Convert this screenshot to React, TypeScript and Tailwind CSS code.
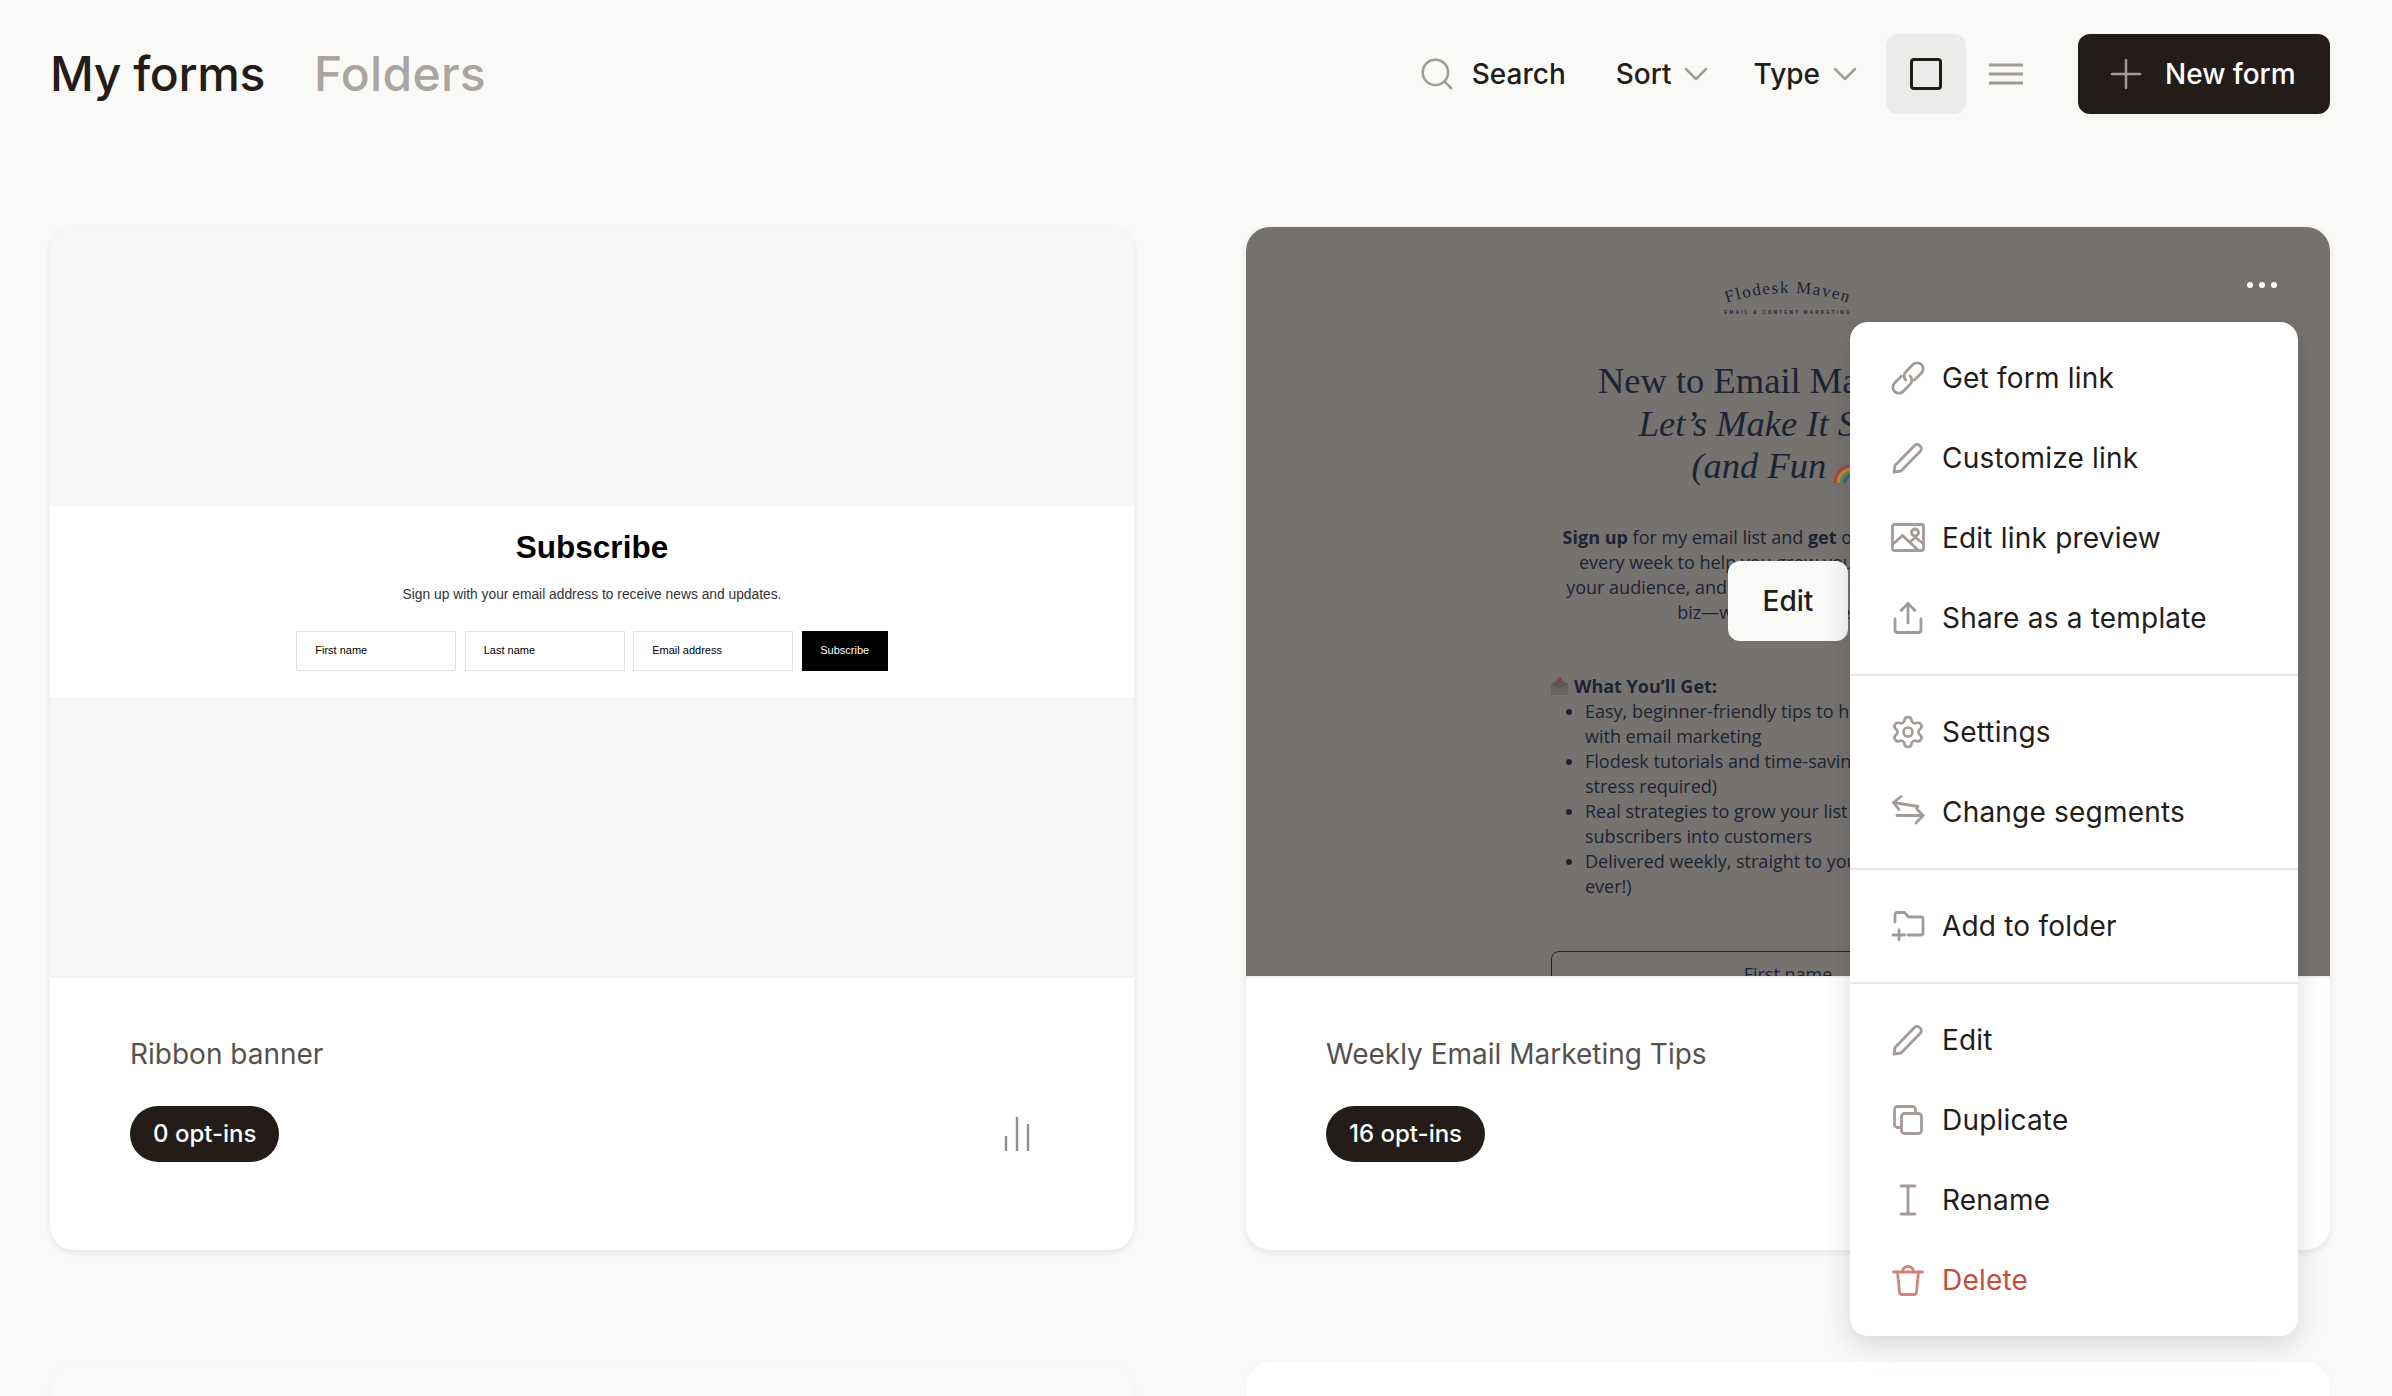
import type { ReactNode } from "react";
import { ChevronDown, Plus, Search, Settings } from "lucide-react";

function Icon({ children, red }: { children: ReactNode; red?: boolean }) {
  return (
    <svg
      viewBox="0 0 32 32"
      fill="none"
      stroke="currentColor"
      strokeWidth={2.8}
      strokeLinecap="round"
      strokeLinejoin="round"
      className={`h-8 w-8 shrink-0 overflow-visible ${red ? "text-[#d0867a]" : "text-[#a39b98]"}`}
    >
      {children}
    </svg>
  );
}

const linkIcon = (
  <g transform="rotate(-45 16 16)">
    <path d="M13 10H3a6 6 0 0 0 0 12h10a6 6 0 0 0 6-6" />
    <path d="M19 22h10a6 6 0 0 0 0-12H19a6 6 0 0 0-6 6" />
  </g>
);
const pencilIcon = <path d="M2 30l1-6.500L22.500 3.500a3.500 3.500 0 0 1 5 0l.8.800a3.500 3.500 0 0 1 0 5L9 29z" />;
const imageIcon = (
  <>
    <rect x="0.500" y="2.500" width="31" height="26" rx="2" />
    <path d="M1 22l9.500-8.500L26 28" />
    <path d="M18.500 19.500l5-4 7.500 6" />
    <circle cx="23" cy="10.500" r="3.500" />
  </>
);
const shareIcon = (
  <>
    <path d="M3 17v11a2.500 2.500 0 0 0 2.500 2.500h21A2.500 2.500 0 0 0 29 28V17" />
    <path d="M16 1.500V21" />
    <path d="M9 8.500l7-7 7 7" />
  </>
);
const swapIcon = (
  <>
    <path d="M1.500 6.500L26 10.500" />
    <path d="M9 0.500L1.500 6.500 7 13.500" />
    <path d="M5 19.500h26" />
    <path d="M24.500 12.500L31 19.500l-7 7.500" />
  </>
);
const folderIcon = (
  <>
    <path d="M3 12V4.500A2 2 0 0 1 5 2.500h7.500l4 4.500H29a2 2 0 0 1 2 2v14a2 2 0 0 1-2 2H16" />
    <path d="M7 20v10M1 25h12" />
  </>
);
const copyIcon = (
  <>
    <rect x="9.500" y="9.500" width="20" height="20" rx="3" />
    <path d="M9 23.500H5.500a3 3 0 0 1-3-3v-15a3 3 0 0 1 3-3h15a3 3 0 0 1 3 3v3.500" />
  </>
);
const cursorIcon = <path d="M9 2h14M9 30h14M16 2v28" />;
const trashIcon = (
  <>
    <path d="M1.500 8h29" />
    <path d="M5.500 8l2 20a2.500 2.500 0 0 0 2.500 2.500h12a2.500 2.500 0 0 0 2.500-2.500l2-20" />
    <path d="M10.500 8a5.500 5.500 0 0 1 11 0" />
  </>
);

const menuGroups: { label: string; icon: ReactNode; red?: boolean }[][] = [
  [
    { label: "Get form link", icon: <Icon>{linkIcon}</Icon> },
    { label: "Customize link", icon: <Icon>{pencilIcon}</Icon> },
    { label: "Edit link preview", icon: <Icon>{imageIcon}</Icon> },
    { label: "Share as a template", icon: <Icon>{shareIcon}</Icon> },
  ],
  [
    { label: "Settings", icon: <Settings size={36} strokeWidth={1.8} className="-mx-0.5 shrink-0 text-[#a39b98]" /> },
    { label: "Change segments", icon: <Icon>{swapIcon}</Icon> },
  ],
  [{ label: "Add to folder", icon: <Icon>{folderIcon}</Icon> }],
  [
    { label: "Edit", icon: <Icon>{pencilIcon}</Icon> },
    { label: "Duplicate", icon: <Icon>{copyIcon}</Icon> },
    { label: "Rename", icon: <Icon>{cursorIcon}</Icon> },
    { label: "Delete", icon: <Icon red>{trashIcon}</Icon>, red: true },
  ],
];

function ActionsMenu() {
  return (
    <div className="absolute left-[604px] top-[95px] z-20 w-[448px] divide-y-2 divide-[#e8e8e8] rounded-[18px] bg-white shadow-[0_8px_28px_rgba(0,0,0,0.14)]">
      {menuGroups.map((group, i) => (
        <div key={i} className="py-[16px]">
          {group.map((item) => (
            <div key={item.label} className="flex h-20 items-center gap-[18px] pl-[42px]">
              {item.icon}
              <span className={`text-[28px] tracking-[0.2px] ${item.red ? "text-[#c24f3d]" : "text-[#231c19]"}`}>
                {item.label}
              </span>
            </div>
          ))}
        </div>
      ))}
    </div>
  );
}

function Footer({ name, optins, bars }: { name: string; optins: string; bars?: boolean }) {
  return (
    <div className="h-[274px] border-t-2 border-[#f3f3f2] pl-20 pr-[104px] pt-[58px]">
      <div className="text-[28px] leading-[36px] text-[#57514d]">{name}</div>
      <div className="mt-[34px] flex items-center justify-between">
        <div className="flex h-14 items-center rounded-full bg-[#231c19] px-[23px] text-[24px] font-medium text-white">
          {optins}
        </div>
        {bars && (
          <svg width="26" height="36" viewBox="0 0 26 36" stroke="#948c89" strokeWidth="2.400">
            <path d="M2 35V20M13 35V1M24 35V8" />
          </svg>
        )}
      </div>
    </div>
  );
}

function RibbonPreview() {
  return (
    <div className="flex h-[749px] items-center bg-[#f7f7f7] font-['Liberation_Sans',sans-serif] text-black">
      <div className="flex h-[190px] w-full flex-col items-center bg-white pt-[21px]">
        <div className="text-[31.500px] font-bold leading-[38px]">Subscribe</div>
        <div className="mt-[19px] text-[13.800px] leading-[20px] text-[#333333]">
          Sign up with your email address to receive news and updates.
        </div>
        <div className="mt-[26px] flex gap-[8.500px] text-[11px]">
          {["First name", "Last name", "Email address"].map((p) => (
            <div key={p} className="flex h-[40px] w-[160px] items-center border border-[#e2e2e2] pl-[18px]">
              {p}
            </div>
          ))}
          <div className="flex h-[40px] w-[86px] items-center justify-center bg-black text-white">Subscribe</div>
        </div>
      </div>
    </div>
  );
}

function Line({ children }: { children: ReactNode }) {
  return <span className="block whitespace-nowrap">{children}</span>;
}

function MavenPreview() {
  return (
    <div className="relative h-[749px] overflow-hidden bg-[#767270] text-[#1b2433]">
      <svg width="180" height="50" viewBox="0 0 180 50" className="absolute left-[452px] top-[48px]" fill="#1b2433">
        <path id="logo-arc" d="M28 28 Q90 8 152 28" fill="none" />
        <text className="font-['Liberation_Serif',serif]" fontSize="17" letterSpacing="1.500">
          <textPath href="#logo-arc" startOffset="50%" textAnchor="middle">
            Flodesk Maven
          </textPath>
        </text>
        <text
          x="90"
          y="39"
          textAnchor="middle"
          fontSize="4.500"
          fontWeight="700"
          letterSpacing="2.300"
          className="font-['Liberation_Sans',sans-serif]"
        >
          EMAIL &amp; CONTENT MARKETING
        </text>
      </svg>

      <div className="flex flex-col items-center pt-[133px]">
        <div className="text-center font-['Liberation_Serif',serif] text-[36.500px] leading-[42.500px]">
          <Line>New to Email Marketing?</Line>
          <Line>
            <em>Let’s Make It Simple</em>
          </Line>
          <Line>
            <em>(and Fun </em>
            <svg
              viewBox="0 0 36 30"
              className="-ml-[3px] inline-block h-[32px] w-[40px] align-[-5px]"
              fill="none"
              strokeWidth="3"
            >
              <path d="M2 30a16 16 0 0 1 32 0" stroke="#a8483f" />
              <path d="M5 30a13 13 0 0 1 26 0" stroke="#b98a3a" />
              <path d="M8 30a10 10 0 0 1 20 0" stroke="#5d8a4a" />
              <path d="M11 30a7 7 0 0 1 14 0" stroke="#3f5f8f" />
            </svg>
            <em>)</em>
          </Line>
        </div>

        <div className="mt-[37px] text-center font-['Open_Sans',sans-serif] text-[18px] leading-[25px]">
          <Line>
            <b>Sign up</b> for my email list and <b>get</b> one helpful email tip
          </Line>
          <Line>every week to help you grow your email list, reach</Line>
          <Line>your audience, and make more money in your online</Line>
          <Line>biz—without the overload.</Line>
        </div>

        <div className="mt-[49px] w-[474px] font-['Open_Sans',sans-serif] text-[18px] leading-[25px]">
          <div className="flex items-center gap-[6px] font-bold">
            <svg width="17" height="18" viewBox="0 0 17 18" className="shrink-0">
              <path d="M0 7l8.500 5L17 7v11H0z" fill="#67635f" />
              <path d="M0 7l8.500-5L17 7l-8.500 5z" fill="#5c5855" />
              <circle cx="8.500" cy="3" r="2.500" fill="#8f4038" />
            </svg>
            What You’ll Get:
          </div>
          <ul className="list-disc pl-[34px]">
            <li>
              <Line>Easy, beginner-friendly tips to help you get started</Line>
              <Line>with email marketing</Line>
            </li>
            <li>
              <Line>Flodesk tutorials and time-saving hacks (no</Line>
              <Line>stress required)</Line>
            </li>
            <li>
              <Line>Real strategies to grow your list and turn</Line>
              <Line>subscribers into customers</Line>
            </li>
            <li>
              <Line>Delivered weekly, straight to your inbox (free, for</Line>
              <Line>ever!)</Line>
            </li>
          </ul>
          <div className="mt-[52px] h-[60px] rounded-[8px] border border-[#1b2433] pt-[10px] text-center">First name</div>
        </div>
      </div>

      <div className="absolute left-[482px] top-[334px] z-10 flex h-20 w-[120px] items-center justify-center rounded-[12px] bg-[#f9f9f7] font-['Inter',sans-serif] text-[28px] font-medium text-[#231c19]">
        Edit
      </div>
      <div className="absolute right-[53px] top-[55px] flex gap-[6px]">
        <span className="h-[6px] w-[6px] rounded-full bg-white" />
        <span className="h-[6px] w-[6px] rounded-full bg-white" />
        <span className="h-[6px] w-[6px] rounded-full bg-white" />
      </div>
    </div>
  );
}

export default function App() {
  return (
    <div className="h-[1396px] overflow-hidden bg-[#f9f9f7] pl-[50px] pr-[62px] pt-[34px] font-['Inter',sans-serif] text-[#231c19]">
      <header className="mb-[113px] flex h-20 items-center">
        <h1 className="text-[48px] font-medium leading-none tracking-[-0.4px]">My forms</h1>
        <div className="ml-[49px] text-[48px] font-medium leading-none tracking-[0.3px] text-[#aba5a1]">Folders</div>

        <div className="ml-auto flex items-center text-[28px] font-medium">
          <Search size={38} strokeWidth={1.600} className="text-[#a39b98]" />
          <span className="ml-[16px]">Search</span>
          <span className="ml-[50px]">Sort</span>
          <ChevronDown size={40} strokeWidth={1.500} className="ml-[4px] text-[#a39b98]" />
          <span className="ml-[38px]">Type</span>
          <ChevronDown size={40} strokeWidth={1.500} className="ml-[5px] text-[#a39b98]" />
          <div className="ml-[21px] flex h-20 w-20 items-center justify-center rounded-[12px] bg-[#ebebe9]">
            <div className="h-8 w-8 rounded-[4px] border-[3px] border-[#231c19]" />
          </div>
          <svg width="34" height="22" viewBox="0 0 34 22" stroke="#a39b98" strokeWidth="3" className="ml-[23px]">
            <path d="M0 2h34M0 11h34M0 20h34" />
          </svg>
          <div className="ml-[55px] flex h-20 w-[252px] items-center rounded-[12px] bg-[#231c19] pl-[24px] text-white">
            <Plus size={48} strokeWidth={1.250} className="text-[#a39b98]" />
            <span className="ml-[15px]">New form</span>
          </div>
        </div>
      </header>

      <div className="grid grid-cols-2 gap-x-[112px] gap-y-[112px]">
        <div className="overflow-hidden rounded-[24px] bg-white shadow-[0_2px_6px_rgba(0,0,0,0.09)]">
          <RibbonPreview />
          <Footer name="Ribbon banner" optins="0 opt-ins" bars />
        </div>
        <div className="relative rounded-[24px] bg-white shadow-[0_2px_6px_rgba(0,0,0,0.09)]">
          <div className="overflow-hidden rounded-t-[24px]">
            <MavenPreview />
          </div>
          <Footer name="Weekly Email Marketing Tips" optins="16 opt-ins" />
          <ActionsMenu />
        </div>
        <div className="h-[400px] rounded-[24px] bg-[#f9f9f9] shadow-[0_1px_4px_rgba(0,0,0,0.03)]" />
        <div className="h-[400px] rounded-[24px] bg-white shadow-[0_1px_4px_rgba(0,0,0,0.04)]" />
      </div>
    </div>
  );
}
